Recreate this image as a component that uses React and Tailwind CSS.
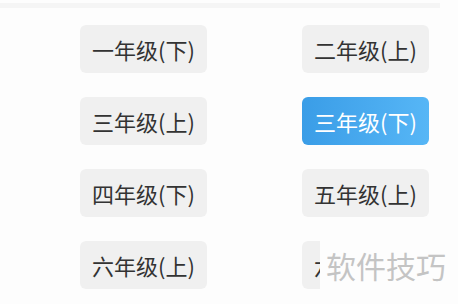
import React from "react";

const rows = [
  ["一年级(下)", "二年级(上)"],
  ["三年级(上)", "三年级(下)"],
  ["四年级(下)", "五年级(上)"],
  ["六年级(上)", "六年级(下)"],
];

function Btn({ label, active }) {
  return (
    <div
      className={
        "w-[127px] h-[48px] rounded-[6px] flex items-center justify-center text-[22px] leading-none " +
        (active
          ? "bg-gradient-to-r from-[#3a9de7] to-[#56b6f6] text-white"
          : "bg-[#f0f0f0] text-[#333333]")
      }
    >
      {label}
    </div>
  );
}

export default function App() {
  return (
    <div
      className="relative w-[458px] h-[304px] overflow-hidden bg-[#fdfdfd]"
      style={{ fontFamily: '"Noto Sans CJK SC", "Noto Sans", sans-serif' }}
    >
      <div className="pt-[3px]">
        <div className="w-[440px] h-[5px] bg-[#f5f5f5]" />
      </div>
      <div className="flex flex-col gap-[24px] pt-[17px] pl-[80px]">
        {rows.map((r, i) => (
          <div key={i} className="flex gap-[95px]">
            <Btn label={r[0]} />
            <Btn label={r[1]} active={i === 1} />
          </div>
        ))}
      </div>
      <div className="absolute left-[320px] top-[238px] w-[138px] h-[54px] bg-[#fdfdfd] flex items-center pl-[6px]">
        <span className="text-[30px] leading-none text-[#c4c4c4]">软件技巧</span>
      </div>
    </div>
  );
}
